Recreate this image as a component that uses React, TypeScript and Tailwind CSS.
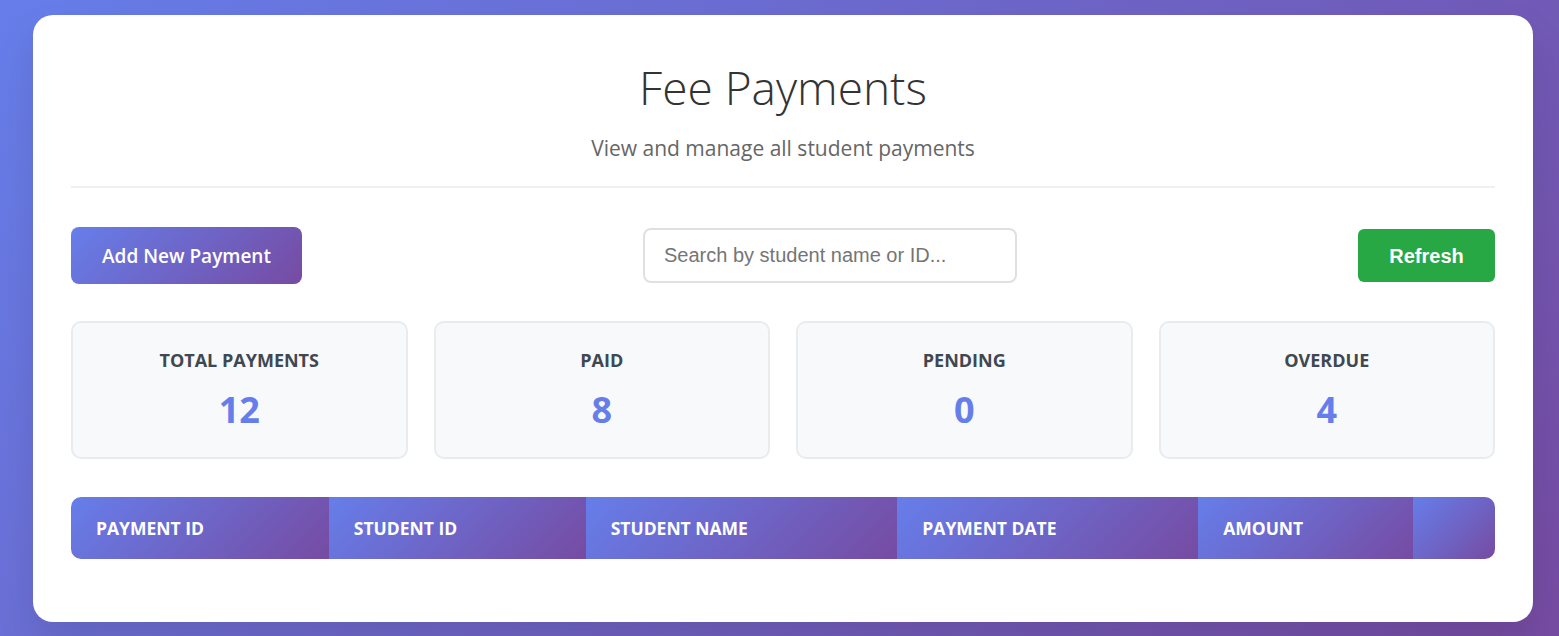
const stats = [
  { label: "Total Payments", value: 12 },
  { label: "Paid", value: 8 },
  { label: "Pending", value: 0 },
  { label: "Overdue", value: 4 },
];

const columns = [
  { label: "Payment ID", w: "w-[258px]" },
  { label: "Student ID", w: "w-[257px]" },
  { label: "Student Name", w: "w-[312px]" },
  { label: "Payment Date", w: "w-[301px]" },
  { label: "Amount", w: "w-[215px]" },
  { label: "", w: "w-[82px]" },
];

const grad = "bg-[linear-gradient(135deg,#667eea_0%,#764ba2_100%)]";

export default function App() {
  return (
    <div
      className={`min-h-screen ${grad} pt-[15px] pl-[33px] pb-[14px] font-['Open_Sans',sans-serif]`}
    >
      <div className="w-[1500px] rounded-[20px] bg-white px-[38px] pt-[45px] pb-[63px] shadow-[0_20px_40px_rgba(0,0,0,0.1)]">
        {/* header */}
        <header className="border-b-2 border-[#f0f0f0] pb-[24px] text-center">
          <h1 className="text-[46px] font-light leading-[1.2] text-[#333]">Fee Payments</h1>
          <p className="mt-[20px] text-[21px] leading-[1.3] text-[#666]">
            View and manage all student payments
          </p>
        </header>

        {/* toolbar */}
        <div className="mt-[39px] flex items-center justify-between">
          <button
            className={`${grad} h-[57px] w-[231px] rounded-[8px] text-[19px] font-semibold text-white`}
          >
            Add New Payment
          </button>
          <input
            placeholder="Search by student name or ID..."
            className="h-[55px] w-[374px] rounded-[8px] border-2 border-[#e0e0e0] px-[19px] font-['Liberation_Sans',sans-serif] text-[20px] text-[#333] placeholder:text-[#757575] outline-none"
          />
          <button className="h-[53px] w-[137px] rounded-[6px] bg-[#28a745] font-['Liberation_Sans',sans-serif] text-[20px] font-bold text-white">
            Refresh
          </button>
        </div>

        {/* stats */}
        <div className="mt-[37px] grid grid-cols-4 gap-[26px]">
          {stats.map((s) => (
            <div
              key={s.label}
              className="flex h-[138px] flex-col items-center rounded-[10px] border-2 border-[#e9ecef] bg-[#f8f9fa] pt-[25px]"
            >
              <h3 className="text-[18px] font-bold uppercase leading-[1.4] text-[#3f4851]">
                {s.label}
              </h3>
              <div className="mt-[14px] text-[36px] font-bold leading-[1.2] text-[#667eea]">
                {s.value}
              </div>
            </div>
          ))}
        </div>

        {/* table */}
        <div className="mt-[38px] overflow-hidden rounded-[10px]">
          <table className="w-full border-collapse">
            <thead>
              <tr>
                {columns.map((c, i) => (
                  <th
                    key={i}
                    className={`${c.w} ${grad} h-[62px] px-[25px] text-left text-[17.5px] font-bold uppercase text-white`}
                  >
                    {c.label}
                  </th>
                ))}
              </tr>
            </thead>
            <tbody />
          </table>
        </div>
      </div>
    </div>
  );
}
